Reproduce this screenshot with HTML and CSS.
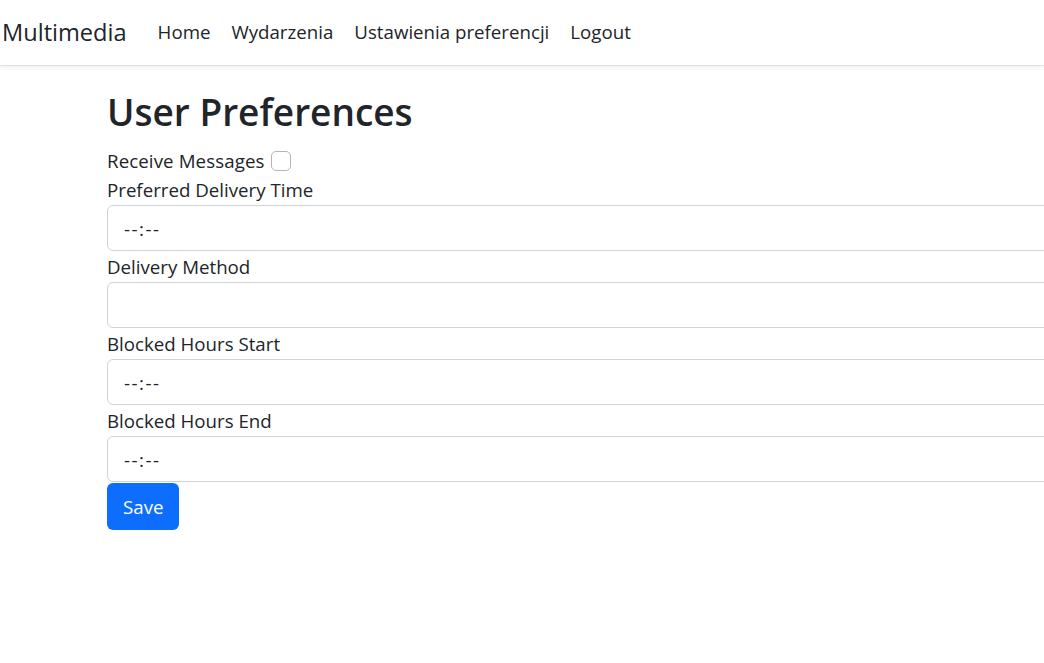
FILE: index.html
```html
<!DOCTYPE html>
<html lang="pl">
<head>
<meta charset="utf-8">
<title>User Preferences</title>
<link rel="stylesheet" href="styles.css">
</head>
<body>
<header class="navbar">
  <a class="brand" href="#">Multimedia</a>
  <nav class="nav-links">
    <a href="#">Home</a>
    <a href="#">Wydarzenia</a>
    <a href="#">Ustawienia preferencji</a>
    <a href="#">Logout</a>
  </nav>
</header>
<main class="page">
  <h1 class="title">User Preferences</h1>
  <form class="prefs">
    <div class="check-row">
      <label for="recv">Receive Messages</label>
      <input type="checkbox" id="recv" class="check">
    </div>
    <div class="field">
      <label for="pdt">Preferred Delivery Time</label>
      <input id="pdt" class="control" type="text" placeholder="--:--">
    </div>
    <div class="field">
      <label for="dm">Delivery Method</label>
      <input id="dm" class="control" type="text">
    </div>
    <div class="field">
      <label for="bhs">Blocked Hours Start</label>
      <input id="bhs" class="control" type="text" placeholder="--:--">
    </div>
    <div class="field">
      <label for="bhe">Blocked Hours End</label>
      <input id="bhe" class="control" type="text" placeholder="--:--">
    </div>
    <button type="button" class="btn-save">Save</button>
  </form>
</main>
</body>
</html>
```
FILE: styles.css
```css
html, body {
  margin: 0;
  padding: 0;
  overflow: hidden;
  background: #fff;
}
body {
  font-family: "Open Sans", "Noto Sans", sans-serif;
  font-size: 18.7px;
  color: #212529;
}
a {
  text-decoration: none;
  color: inherit;
}
.navbar {
  display: flex;
  align-items: center;
  height: 65px;
  padding-left: 2px;
  border-bottom: 1px solid #dfdfe6;
  box-shadow: 0 2px 5px rgba(0, 0, 0, 0.06);
  background: #fff;
  position: relative;
  z-index: 1;
}
.brand {
  font-size: 23.6px;
  line-height: 30px;
  color: #212529;
  margin-right: 31px;
  position: relative;
  top: -1px;
}
.nav-links {
  display: flex;
  gap: 21px;
  position: relative;
  top: -1px;
}
.nav-links a {
  color: #212529;
  font-size: 18.7px;
}
.page {
  padding: 22px 0 0 107px;
}
.title {
  margin: 0 0 12px;
  font-size: 37px;
  line-height: 48px;
  font-weight: 600;
}
.prefs {
  display: flex;
  flex-direction: column;
  align-items: flex-start;
}
.check-row {
  display: flex;
  align-items: center;
  height: 28px;
  gap: 6px;
  position: relative;
  top: -1px;
}
.check-row label {
  line-height: 28px;
  letter-spacing: 0.1px;
}
.check {
  appearance: none;
  -webkit-appearance: none;
  width: 20px;
  height: 20px;
  margin: 0;
  border: 1px solid #b5b5b5;
  border-radius: 5px;
  background: #fff;
}
.field {
  display: flex;
  flex-direction: column;
  align-items: flex-start;
}
.field + .field {
  margin-top: 2px;
}
.field label {
  line-height: 28px;
}
.control {
  box-sizing: border-box;
  width: 980px;
  height: 46px;
  margin-top: 1px;
  padding: 0 16px;
  border: 1px solid #ced4da;
  border-radius: 6px;
  font-family: inherit;
  font-size: 18.7px;
  color: #212529;
  background: #fff;
}
.control::placeholder {
  color: #212529;
  opacity: 1;
  letter-spacing: 1.5px;
}
.btn-save {
  margin-top: 1px;
  height: 47px;
  padding: 0 16px;
  border: 0;
  border-radius: 6px;
  background: #0d6efd;
  color: #fff;
  font-family: inherit;
  font-size: 18.7px;
}
```
